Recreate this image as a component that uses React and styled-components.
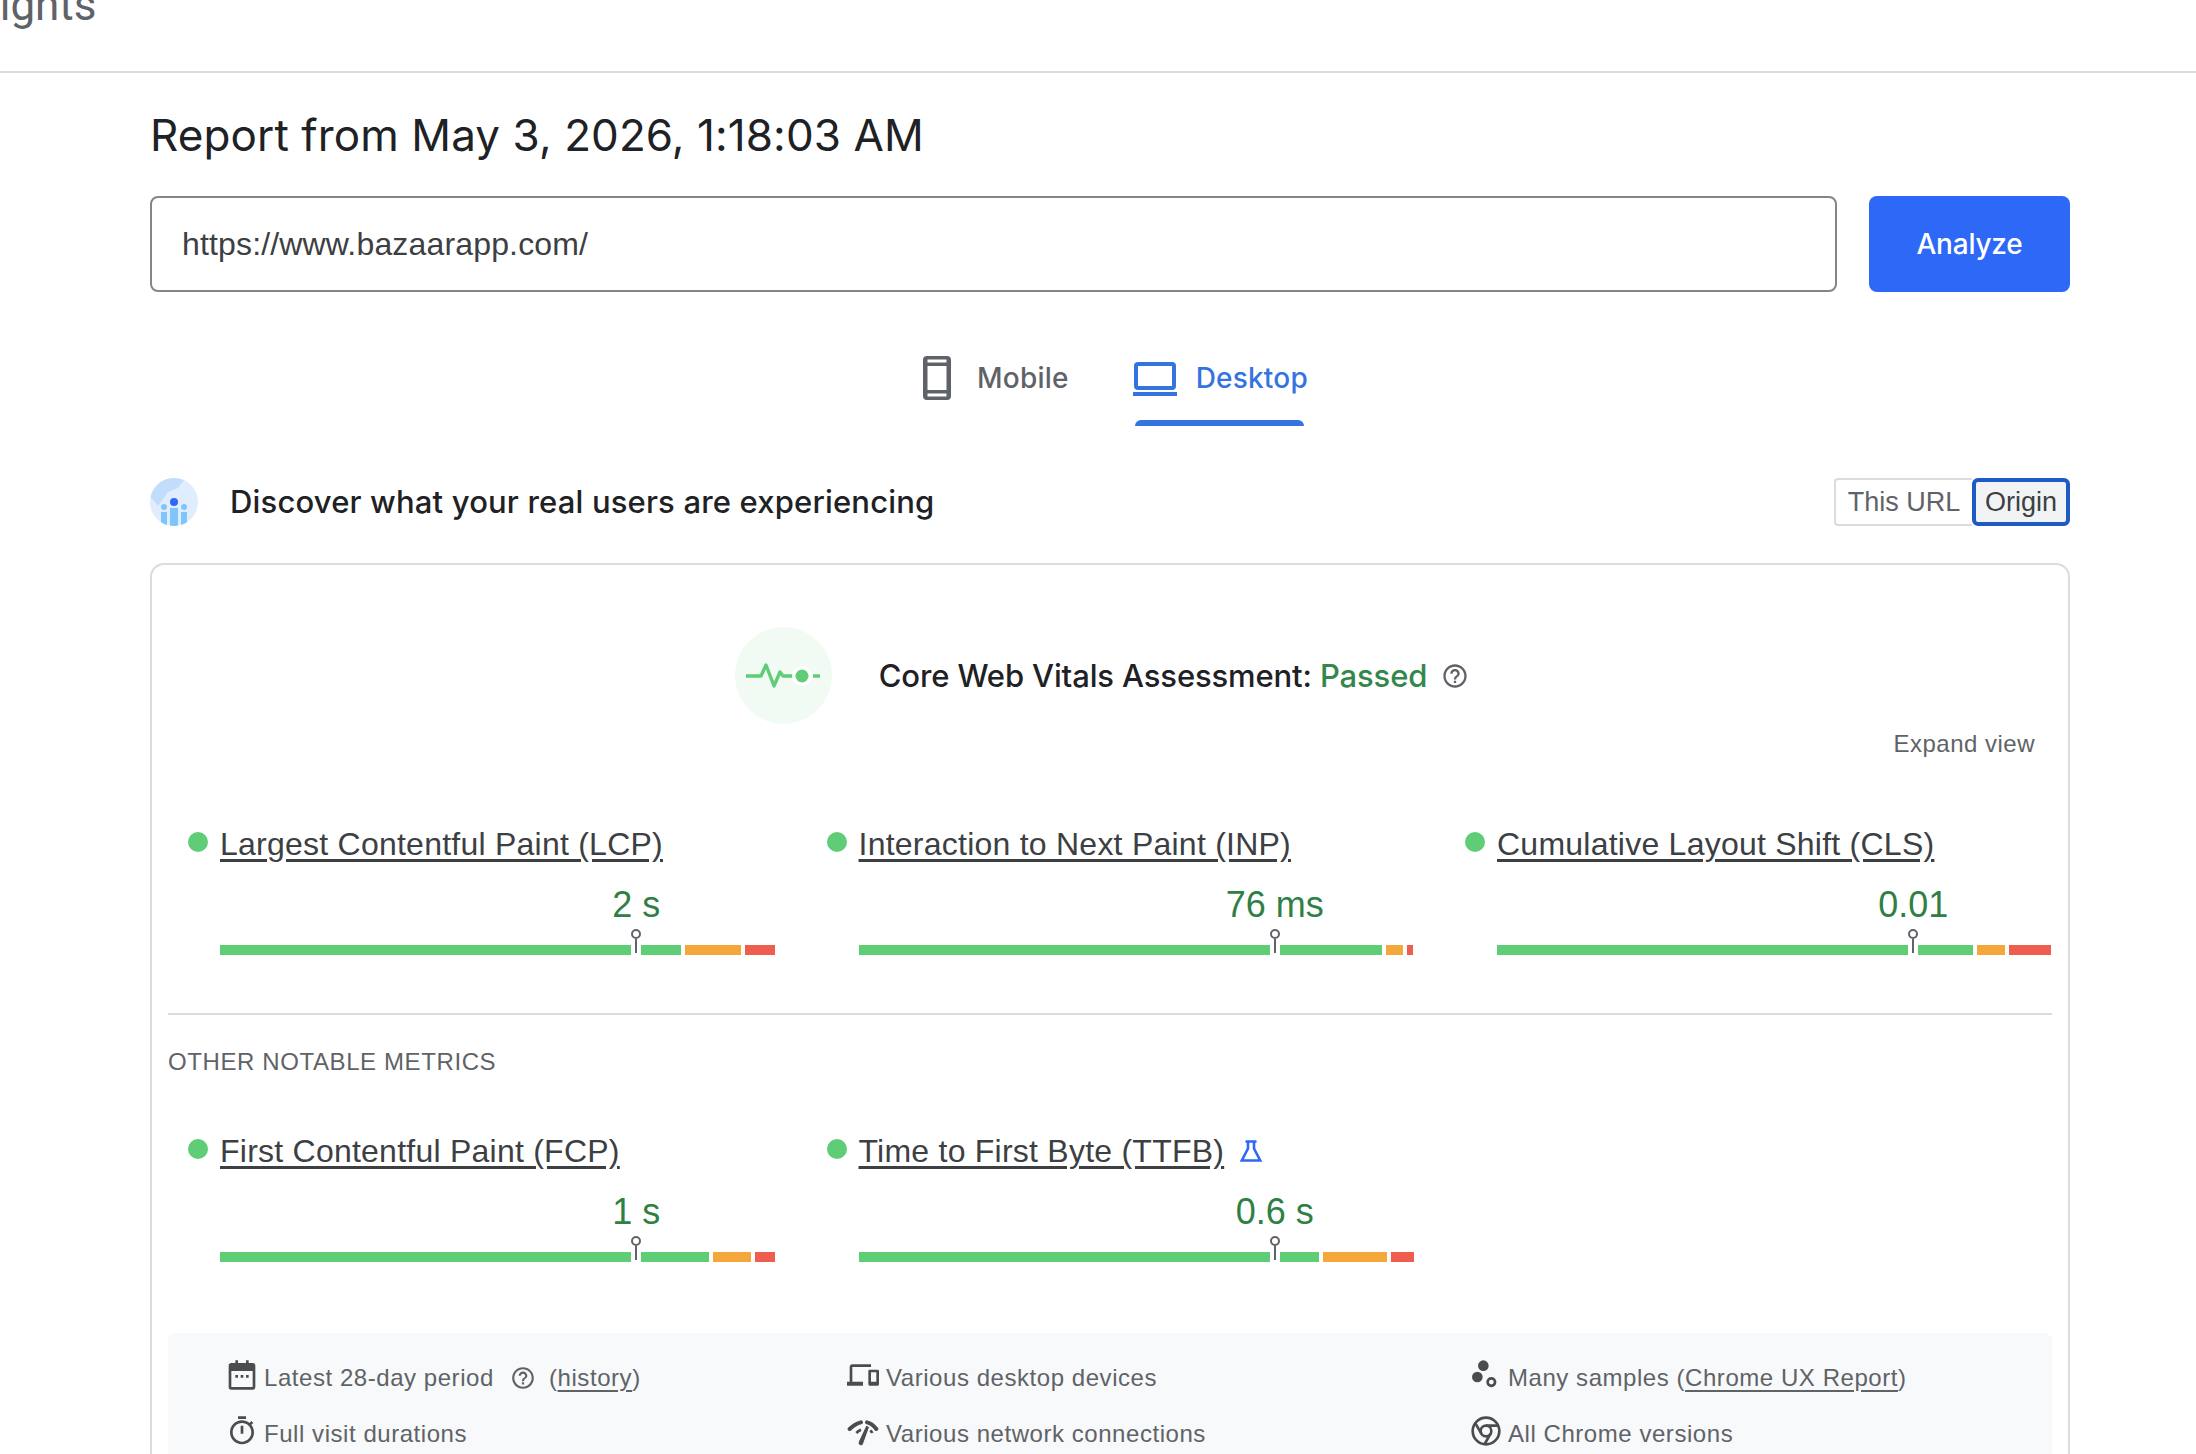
import React from 'react';
import styled, { createGlobalStyle } from 'styled-components';

const GlobalStyle = createGlobalStyle`
    html, body { margin: 0; padding: 0; background: #fff; height: 1454px; overflow: hidden; }
    body { font-family: "Liberation Sans", Arial, sans-serif; color: #202124; }
`;

const HEAD_FONT = `Inter, Roboto, "Liberation Sans", sans-serif`;

const TopBar = styled.header`
    height: 71px;
    border-bottom: 2px solid #dadce0;
    overflow: hidden;
    display: flex;
    align-items: flex-end;
`;

const Brand = styled.span`
    margin: 0 0 40px -292px;
    font: 400 44px/52px Roboto, sans-serif;
    color: #5f6368;
    white-space: nowrap;
`;

const Main = styled.main`
    padding: 0 126px 0 150px;
`;

const Title = styled.h1`
    margin: 38px 0 37px;
    font: 400 44px/48px ${HEAD_FONT};
    letter-spacing: 0.1px;
    color: #202124;
`;

const SearchRow = styled.div`
    display: flex;
    gap: 32px;
`;

const UrlBox = styled.div`
    flex: 1;
    height: 96px;
    box-sizing: border-box;
    border: 2px solid #80868b;
    border-radius: 8px;
    padding: 0 30px;
    display: flex;
    align-items: center;
    font-size: 32px;
    letter-spacing: 0.16px;
    color: #3c4043;
`;

const AnalyzeButton = styled.button`
    width: 201px;
    height: 96px;
    border: 0;
    border-radius: 8px;
    background: #2d68f6;
    color: #fff;
    font: 500 28px ${HEAD_FONT};
    letter-spacing: -0.2px;
`;

const Tabs = styled.nav`
    display: flex;
    justify-content: center;
    gap: 64px;
    margin: 60px 0 52px;
    padding-left: 11px;
`;

const Tab = styled.div`
    height: 74px;
    box-sizing: border-box;
    display: flex;
    align-items: flex-start;
    gap: ${p => (p.$active ? 19 : 26)}px;
    position: relative;
    color: ${p => (p.$active ? '#3474e0' : '#5f6368')};
    font: 500 28px/52px ${HEAD_FONT};
    letter-spacing: 0.2px;
    ${p => p.$active && `
        &::after {
            content: '';
            position: absolute;
            left: 2px;
            right: 4px;
            bottom: 0;
            height: 6px;
            border-radius: 6px 6px 0 0;
            background: #3474e0;
        }
    `}
`;

const TabIcon = styled.svg`
    width: ${p => p.$w}px;
    height: 48px;
    margin-top: 2px;
    fill: currentColor;
    flex: none;
`;

const SectionHead = styled.div`
    display: flex;
    align-items: center;
    height: 48px;
    gap: 32px;
`;

const SectionTitle = styled.h2`
    flex: 1;
    margin: 0;
    font: 500 31px/48px ${HEAD_FONT};
    letter-spacing: 0.17px;
    color: #202124;
`;

const Toggle = styled.div`
    display: flex;
    height: 48px;
    font-size: 27px;
    color: #5f6368;
`;

const ToggleItem = styled.div`
    box-sizing: border-box;
    display: flex;
    align-items: center;
    justify-content: center;
    width: ${p => p.$w}px;
    border: ${p => (p.$on ? '4px solid #1f5bc4' : '2px solid #dadce0')};
    border-radius: ${p => (p.$on ? '6px' : '4px 0 0 4px')};
    border-right-width: ${p => (p.$on ? '4px' : '0')};
    background: ${p => (p.$on ? '#f1f3f4' : '#fff')};
    color: ${p => (p.$on ? '#3c4043' : '#5f6368')};
`;

const Card = styled.section`
    margin-top: 37px;
    border: 2px solid #dadce0;
    border-radius: 14px;
    padding: 0 16px;
    height: 1000px;
`;

const Assessment = styled.div`
    display: flex;
    align-items: center;
    justify-content: center;
    padding: 62px 0 0;
    margin-right: 16px;
`;

const PulseBadge = styled.div`
    width: 97px;
    height: 97px;
    border-radius: 50%;
    background: #f1fbf4;
    display: flex;
    align-items: center;
    justify-content: center;
    margin-right: 47px;
`;

const AssessmentText = styled.div`
    font: 500 31px/40px ${HEAD_FONT};
    letter-spacing: -0.13px;
    color: #202124;
`;

const Passed = styled.span`
    color: #34874c;
`;

const HelpIcon = styled.svg`
    width: ${p => p.$size}px;
    height: ${p => p.$size}px;
    fill: #5f6368;
    flex: none;
    margin-left: ${p => p.$ml}px;
`;

const ExpandRow = styled.div`
    text-align: right;
    padding-right: 17px;
    font-size: 24px;
    line-height: 28px;
    letter-spacing: 0.5px;
    color: #5f6368;
    margin-top: 6px;
`;

const MetricGrid = styled.div`
    display: grid;
    grid-template-columns: repeat(3, 638.5px);
    margin-top: ${p => p.$mt}px;
`;

const Metric = styled.div`
    padding-left: 52px;
    width: 555px;
    position: relative;
`;

const Dot = styled.span`
    position: absolute;
    left: 20px;
    top: 10px;
    width: 20px;
    height: 20px;
    border-radius: 50%;
    background: #5fcc76;
`;

const MetricName = styled.div`
    display: flex;
    align-items: center;
    gap: 15px;
    font-size: 32px;
    line-height: 44px;
    letter-spacing: 0.24px;
    color: #3c4043;
`;

const Underlined = styled.a`
    color: inherit;
    text-decoration: underline;
    text-underline-offset: 4px;
`;

const ValueAnchor = styled.div`
    margin-left: 75%;
    width: 0;
    display: flex;
    justify-content: center;
    margin-top: 17px;
    white-space: nowrap;
    font-size: 36px;
    line-height: 44px;
    color: #2e8045;
`;

const Bar = styled.div`
    position: relative;
    display: flex;
    gap: 4px;
    height: 10px;
    margin-top: 18px;
`;

const Segment = styled.span`
    width: ${p => p.$w}px;
    margin-right: ${p => p.$mr || 0}px;
    background: ${p => p.$c};
    flex: none;
`;

const Pin = styled.span`
    position: absolute;
    left: 416px;
    bottom: 2px;
    width: 2px;
    height: 14px;
    margin-left: -1px;
    background: #5f6368;
    &::before {
        content: '';
        position: absolute;
        left: -4px;
        top: -10px;
        width: 10px;
        height: 10px;
        box-sizing: border-box;
        border: 2px solid #5f6368;
        border-radius: 50%;
        background: #fff;
    }
`;

const Divider = styled.hr`
    margin: 58px 0 0;
    border: 0;
    border-top: 2px solid #dadce0;
`;

const SubHeading = styled.div`
    margin-top: 33px;
    font-size: 24px;
    line-height: 28px;
    letter-spacing: 0.6px;
    color: #5f6368;
`;

const InfoPanel = styled.div`
    margin-top: 71px;
    background: #f8f9fa;
    border-radius: 8px;
    display: grid;
    grid-template-columns: 621px 623px 1fr;
    grid-auto-rows: 56px;
    padding: 17px 0 0 58px;
    height: 200px;
    box-sizing: border-box;
`;

const InfoItem = styled.div`
    display: flex;
    align-items: center;
    gap: ${p => p.$gap || 6}px;
    font-size: 24px;
    letter-spacing: 0.55px;
    color: #5f6368;
`;

const InfoIcon = styled.svg`
    width: 32px;
    height: 32px;
    fill: #4a4d50;
    flex: none;
    margin-top: -6px;
`;

const GREEN = '#5fcc76';
const ORANGE = '#f4a73b';
const RED = '#ed5e4f';

const Meter = ({ parts: [a, b, c] }) => (
    <Bar>
        <Segment $w={411} $mr={6} $c={GREEN} />
        <Segment $w={a} $c={GREEN} />
        <Segment $w={b} $c={ORANGE} />
        <Segment $w={c} $c={RED} />
        <Pin />
    </Bar>
);

const FlaskIcon = () => (
    <svg width="24" height="24" viewBox="0 0 24 24" fill="none" stroke="#2d68f6" strokeWidth="2.6">
        <path d="M6.5 2.5h11M9 2.5v7L2.8 21.5h18.4L15 9.5v-7" />
    </svg>
);

const MetricBlock = ({ name, value, parts, flask }) => (
    <Metric>
        <Dot />
        <MetricName>
            <Underlined>{name}</Underlined>
            {flask && <FlaskIcon />}
        </MetricName>
        <ValueAnchor>{value}</ValueAnchor>
        <Meter parts={parts} />
    </Metric>
);

const HELP = 'M11 18h2v-2h-2v2zm1-16C6.48 2 2 6.48 2 12s4.48 10 10 10 10-4.48 10-10S17.52 2 12 2zm0 18c-4.41 0-8-3.59-8-8s3.59-8 8-8 8 3.59 8 8-3.59 8-8 8zm0-14c-2.21 0-4 1.79-4 4h2c0-1.1.9-2 2-2s2 .9 2 2c0 2-3 1.75-3 5h2c0-2.25 3-2.5 3-5 0-2.21-1.79-4-4-4z';

export default function App() {
    return (
        <>
            <GlobalStyle />
            <TopBar>
                <Brand>PageSpeed Insights</Brand>
            </TopBar>
            <Main>
                <Title>Report from May 3, 2026, 1:18:03 AM</Title>
                <SearchRow>
                    <UrlBox>https://www.bazaarapp.com/</UrlBox>
                    <AnalyzeButton>Analyze</AnalyzeButton>
                </SearchRow>
                <Tabs>
                    <Tab>
                        <TabIcon $w={28} viewBox="0 0 28 44">
                            <path d="M4 0h20a4 4 0 0 1 4 4v36a4 4 0 0 1-4 4H4a4 4 0 0 1-4-4V4a4 4 0 0 1 4-4zm.5 6.500h19v-3h-19zm0 3.500v24h19v-24zm0 27.500v3h19v-3z" fillRule="evenodd" />
                        </TabIcon>
                        Mobile
                    </Tab>
                    <Tab $active>
                        <TabIcon $w={44} viewBox="0 0 44 48">
                            <path d="M5 8h34a4 4 0 0 1 4 4v20a4 4 0 0 1-4 4H5a4 4 0 0 1-4-4V12a4 4 0 0 1 4-4zm0 4v20h34V12zM0 38h44v4H0z" fillRule="evenodd" />
                        </TabIcon>
                        Desktop
                    </Tab>
                </Tabs>
                <SectionHead>
                    <svg width="48" height="48" viewBox="0 0 48 48">
                        <defs>
                            <clipPath id="crux-globe"><circle cx="24" cy="24" r="24" /></clipPath>
                        </defs>
                        <g clipPath="url(#crux-globe)">
                            <rect width="48" height="48" fill="#e0edfd" />
                            <path d="M0 18L8 28 18 14 28 10 34 2V0H0z" fill="#c2ddfb" />
                            <circle cx="24" cy="24" r="4" fill="#2d68f6" />
                            <circle cx="14" cy="29" r="3" fill="#7fc4fb" />
                            <circle cx="34" cy="29" r="3" fill="#7fc4fb" />
                            <rect x="20" y="30" width="8" height="18" fill="#7fc4fb" />
                            <rect x="11" y="34" width="6" height="14" fill="#7fc4fb" />
                            <rect x="31" y="34" width="6" height="14" fill="#7fc4fb" />
                        </g>
                    </svg>
                    <SectionTitle>Discover what your real users are experiencing</SectionTitle>
                    <Toggle>
                        <ToggleItem $w={138}>This URL</ToggleItem>
                        <ToggleItem $w={98} $on>Origin</ToggleItem>
                    </Toggle>
                </SectionHead>
                <Card>
                    <Assessment>
                        <PulseBadge>
                            <svg width="74" height="30" viewBox="0 0 74 30" fill="none">
                                <path d="M0 15h15l5-11 8 21 6-14 3 4h10" stroke="#5fcc76" strokeWidth="3.4" strokeLinejoin="round" />
                                <circle cx="56" cy="15" r="10" fill="#fff" />
                                <circle cx="56" cy="15" r="6.5" fill="#5fcc76" />
                                <path d="M67 15h7" stroke="#5fcc76" strokeWidth="3.4" />
                            </svg>
                        </PulseBadge>
                        <AssessmentText>Core Web Vitals Assessment: <Passed>Passed</Passed></AssessmentText>
                        <HelpIcon $size={28} $ml={14} viewBox="0 0 24 24"><path d={HELP} /></HelpIcon>
                    </Assessment>
                    <ExpandRow>Expand view</ExpandRow>
                    <MetricGrid $mt={64}>
                        <MetricBlock name="Largest Contentful Paint (LCP)" value="2 s" parts={[40, 56, 30]} />
                        <MetricBlock name="Interaction to Next Paint (INP)" value="76 ms" parts={[102, 17, 6]} />
                        <MetricBlock name="Cumulative Layout Shift (CLS)" value="0.01" parts={[55, 28, 42]} />
                    </MetricGrid>
                    <Divider />
                    <SubHeading>OTHER NOTABLE METRICS</SubHeading>
                    <MetricGrid $mt={53}>
                        <MetricBlock name="First Contentful Paint (FCP)" value="1 s" parts={[68, 38, 20]} />
                        <MetricBlock name="Time to First Byte (TTFB)" value="0.6 s" parts={[39, 64, 23]} flask />
                    </MetricGrid>
                    <InfoPanel>
                        <InfoItem>
                            <InfoIcon viewBox="0 0 24 24">
                                <path d="M7 1h2v2h6V1h2v2h3a2 2 0 0 1 2 2v16a2 2 0 0 1-2 2H4a2 2 0 0 1-2-2V5a2 2 0 0 1 2-2h3zM4 9v12h16V9zm3 3h2v2H7zm4 0h2v2h-2zm4 0h2v2h-2z" fillRule="evenodd" />
                            </InfoIcon>
                            Latest 28-day period
                            <HelpIcon $size={26} $ml={10} viewBox="0 0 24 24"><path d={HELP} /></HelpIcon>
                            <span>&nbsp;(<Underlined>history</Underlined>)</span>
                        </InfoItem>
                        <InfoItem $gap={7}>
                            <InfoIcon viewBox="0 0 24 24">
                                <path d="M4 6h14V4H4c-1.1 0-2 .9-2 2v11H0v3h12v-3H4V6zm19 2h-6c-.55 0-1 .45-1 1v10c0 .55.45 1 1 1h6c.55 0 1-.45 1-1V9c0-.55-.45-1-1-1zm-1 9h-4v-7h4v7z" />
                            </InfoIcon>
                            Various desktop devices
                        </InfoItem>
                        <InfoItem>
                            <InfoIcon viewBox="0 0 24 24">
                                <circle cx="10" cy="5" r="4" />
                                <circle cx="5.500" cy="13.500" r="4" />
                                <path d="M16 13.500a3.800 3.800 0 1 0 0 7.600 3.800 3.800 0 0 0 0-7.600zm0 2a1.800 1.800 0 1 1 0 3.600 1.800 1.800 0 0 1 0-3.600z" fillRule="evenodd" />
                            </InfoIcon>
                            <span>Many samples (<Underlined>Chrome UX Report</Underlined>)</span>
                        </InfoItem>
                        <InfoItem>
                            <InfoIcon viewBox="0 0 24 24">
                                <path d="M15 1H9v2h6V1zm-4 13h2V8h-2v6zm8.03-6.61l1.42-1.42c-.43-.51-.9-.99-1.41-1.41l-1.42 1.42C16.07 4.74 14.12 4 12 4c-4.97 0-9 4.03-9 9s4.02 9 9 9 9-4.03 9-9c0-2.12-.74-4.07-1.97-5.61zM12 20c-3.87 0-7-3.13-7-7s3.13-7 7-7 7 3.13 7 7-3.13 7-7 7z" />
                            </InfoIcon>
                            Full visit durations
                        </InfoItem>
                        <InfoItem $gap={7}>
                            <InfoIcon viewBox="0 0 24 24">
                                <g fill="none" stroke="#4a4d50" strokeWidth="3" strokeLinecap="round">
                                    <path d="M2 10.500Q6 6.500 10.500 5.500" />
                                    <path d="M15 5.500Q19 6.500 22 10.500" />
                                </g>
                                <g fill="none" stroke="#4a4d50" strokeWidth="2">
                                    <path d="M7 13.500Q8.500 11.800 10.500 11" />
                                    <path d="M17.500 11.500Q18.500 12.500 19 13.500" />
                                </g>
                                <path d="M14.500 8L16.500 9 12 21.500a1.700 1.700 0 0 1-3.200-1.200z" />
                            </InfoIcon>
                            Various network connections
                        </InfoItem>
                        <InfoItem>
                            <InfoIcon viewBox="0 0 24 24">
                                <g fill="none" stroke="#4a4d50" strokeWidth="2">
                                    <circle cx="12" cy="12" r="10" />
                                    <circle cx="12" cy="12" r="4" />
                                    <path d="M21.200 8H12M3.950 6.060L8.540 14M10.880 21.940L15.460 14" />
                                </g>
                            </InfoIcon>
                            All Chrome versions
                        </InfoItem>
                    </InfoPanel>
                </Card>
            </Main>
        </>
    );
}
